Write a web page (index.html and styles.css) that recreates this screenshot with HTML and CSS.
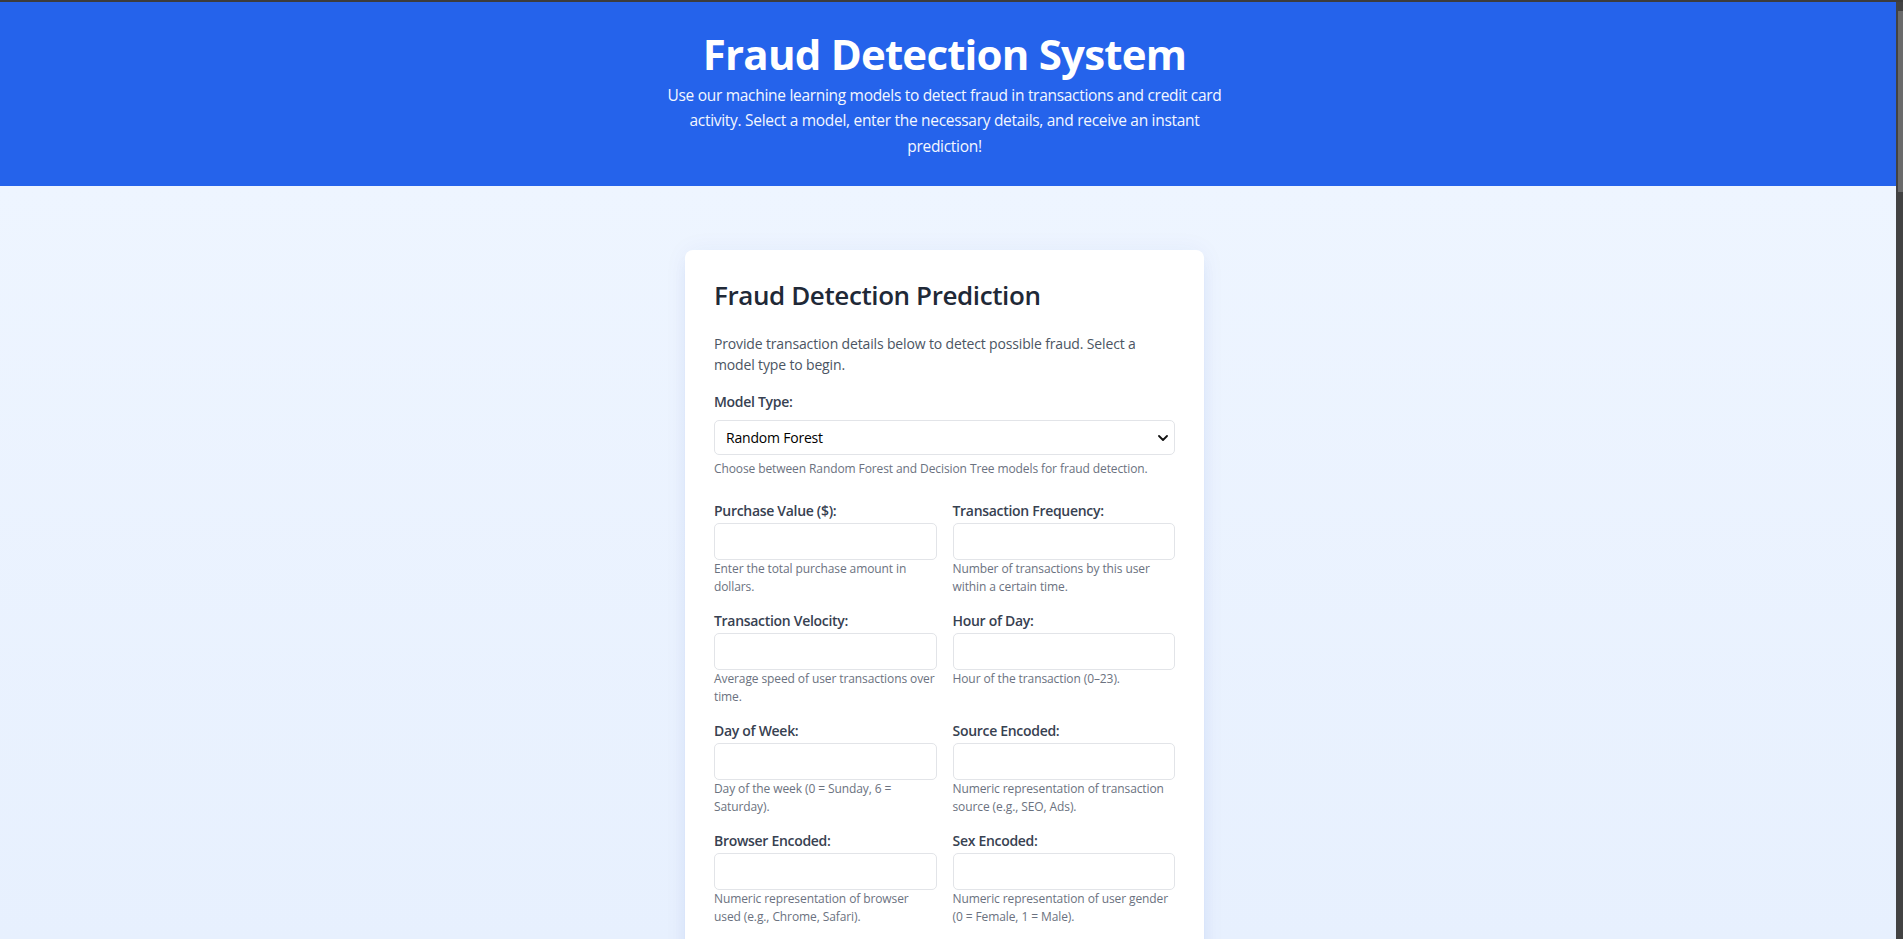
FILE: index.html
```html
<!DOCTYPE html>
<html lang="en">
<head>
<meta charset="utf-8">
<title>Fraud Detection System</title>
<link rel="stylesheet" href="styles.css">
</head>
<body>
<header class="hero">
  <h1 class="hero-title">Fraud Detection System</h1>
  <p class="hero-text">Use our machine learning models to detect fraud in transactions and credit card activity. Select a model, enter the necessary details, and receive an instant prediction!</p>
</header>
<main class="page">
  <section class="card">
    <h2 class="card-title">Fraud Detection Prediction</h2>
    <p class="card-intro">Provide transaction details below to detect possible fraud. Select a model type to begin.</p>
    <form class="form">
      <div class="field-model">
        <label class="label label-model" for="model">Model Type:</label>
        <div class="select-wrap">
          <select id="model" class="select">
            <option>Random Forest</option>
            <option>Decision Tree</option>
          </select>
          <svg class="chevron" width="10" height="6" viewBox="0 0 10 6"><path d="M1 1 L5 5 L9 1" fill="none" stroke="#111" stroke-width="1.8" stroke-linecap="round" stroke-linejoin="round"/></svg>
        </div>
        <p class="help help-model">Choose between Random Forest and Decision Tree models for fraud detection.</p>
      </div>
      <div class="grid">
        <div class="field">
          <label class="label" for="pv">Purchase Value ($):</label>
          <input class="input" id="pv" type="number">
          <p class="help">Enter the total purchase amount in dollars.</p>
        </div>
        <div class="field">
          <label class="label" for="tf">Transaction Frequency:</label>
          <input class="input" id="tf" type="number">
          <p class="help">Number of transactions by this user within a certain time.</p>
        </div>
        <div class="field">
          <label class="label" for="tv">Transaction Velocity:</label>
          <input class="input" id="tv" type="number">
          <p class="help">Average speed of user transactions over time.</p>
        </div>
        <div class="field">
          <label class="label" for="hd">Hour of Day:</label>
          <input class="input" id="hd" type="number">
          <p class="help">Hour of the transaction (0–23).</p>
        </div>
        <div class="field">
          <label class="label" for="dw">Day of Week:</label>
          <input class="input" id="dw" type="number">
          <p class="help">Day of the week (0 = Sunday, 6 = Saturday).</p>
        </div>
        <div class="field">
          <label class="label" for="se">Source Encoded:</label>
          <input class="input" id="se" type="number">
          <p class="help">Numeric representation of transaction source (e.g., SEO, Ads).</p>
        </div>
        <div class="field">
          <label class="label" for="be">Browser Encoded:</label>
          <input class="input" id="be" type="number">
          <p class="help">Numeric representation of browser used (e.g., Chrome, Safari).</p>
        </div>
        <div class="field">
          <label class="label" for="sx">Sex Encoded:</label>
          <input class="input" id="sx" type="number">
          <p class="help">Numeric representation of user gender (0 = Female, 1 = Male).</p>
        </div>
      </div>
      <button class="submit" type="button">Predict Fraud</button>
    </form>
  </section>
</main>
<div class="scrollbar"><div class="scroll-thumb"></div></div>
</body>
</html>
```

FILE: styles.css
```css
html, body {
  margin: 0;
  padding: 0;
}

body {
  border-top: 2px solid #3c3c3c;
  font-family: "Open Sans", "Noto Sans", sans-serif;
  background: #eef5ff;
}

.hero {
  background: #2563eb;
  color: #ffffff;
  text-align: center;
  padding: 28px 14px 26.5px 0;
}

.hero-title {
  margin: 0;
  font-size: 42px;
  line-height: 48px;
  font-weight: 700;
  letter-spacing: -0.8px;
}

.hero-text {
  margin: 4.5px auto 0;
  max-width: 576px;
  font-size: 15.5px;
  line-height: 25.6px;
  letter-spacing: -0.3px;
  color: #f3f7ff;
}

.page {
  padding: 64px 14px 80px 0;
  background: linear-gradient(180deg, #eef5ff 0px, #e7f0fe 753px, #dde9fd 1300px);
}

.card {
  box-sizing: border-box;
  width: 519px;
  margin: 0 auto;
  padding: 29px;
  background: #ffffff;
  border-radius: 8px;
  box-shadow: 0 10px 15px -3px rgba(30, 64, 175, 0.08), 0 4px 6px -4px rgba(30, 64, 175, 0.08), 0 0 24px rgba(30, 64, 175, 0.05);
}

.card-title {
  margin: 0;
  font-size: 26px;
  line-height: 32px;
  font-weight: 600;
  letter-spacing: -0.4px;
  color: #1f2937;
}

.card-intro {
  margin: 22px 0 0;
  font-size: 14px;
  line-height: 21.3px;
  letter-spacing: -0.15px;
  color: #4b5563;
}

.field-model {
  margin-top: 17px;
}

.label {
  display: block;
  font-size: 14px;
  line-height: 20px;
  font-weight: 600;
  letter-spacing: -0.3px;
  color: #374151;
  margin-bottom: 2px;
}

.label-model {
  margin-bottom: 8px;
}

.select-wrap {
  position: relative;
}

.select {
  -webkit-appearance: none;
  appearance: none;
  box-sizing: border-box;
  display: block;
  width: 100%;
  height: 35px;
  padding: 0 30px 0 11px;
  border: 1px solid #e2e4e8;
  border-radius: 5px;
  background: #ffffff;
  font-family: inherit;
  font-size: 14px;
  letter-spacing: -0.2px;
  color: #000000;
}

.chevron {
  position: absolute;
  right: 7px;
  top: 15px;
}

.help {
  margin: 0;
  font-size: 12px;
  line-height: 18.7px;
  letter-spacing: -0.1px;
  color: #6b7280;
}

.help-model {
  margin-top: 5px;
}

.grid {
  margin-top: 21.5px;
  display: grid;
  grid-template-columns: 1fr 1fr;
  column-gap: 16px;
  row-gap: 13.6px;
}

.input {
  box-sizing: border-box;
  display: block;
  width: 100%;
  height: 37px;
  padding: 0 10px;
  border: 1px solid #e2e4e8;
  border-radius: 5px;
  background: #ffffff;
  font-family: inherit;
  font-size: 14px;
}

.submit {
  margin-top: 24px;
  width: 100%;
  height: 42px;
  border: 0;
  border-radius: 6px;
  background: #2563eb;
  color: #ffffff;
  font-family: inherit;
  font-size: 15px;
  font-weight: 600;
}

.scrollbar {
  position: fixed;
  top: 2px;
  right: 0;
  width: 7px;
  height: 100vh;
  background: #424242;
}

.scroll-thumb {
  position: absolute;
  top: 9px;
  right: 0;
  width: 5px;
  height: 181px;
  background: #6a6a6a;
}
```
